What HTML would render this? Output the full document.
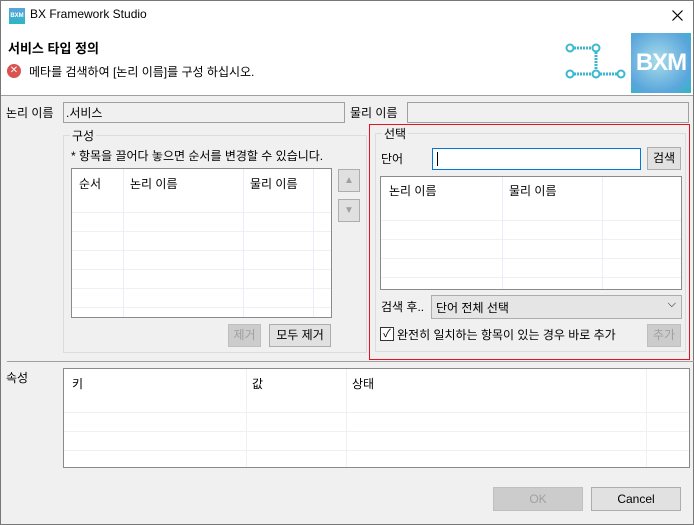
<!DOCTYPE html>
<html><head><meta charset="utf-8"><style>
*{box-sizing:border-box;margin:0;padding:0}
body{width:694px;height:525px;position:relative;background:#f0f0f0;font-family:"Liberation Sans","Noto Sans CJK KR",sans-serif;font-size:12px;color:#000;overflow:hidden}
.a{position:absolute}
.inp{position:absolute;border:1px solid #a0a0a0;background:#f0f0f0}
.btn{position:absolute;border:1px solid #adadad;background:#e1e1e1;text-align:center;font-size:12px}
.dis{color:#a0a0a0;background:#cccccc;border-color:#bfbfbf}
.tbl{position:absolute;border:1px solid #8a8a8a;background:#fff;overflow:hidden}
.grp{position:absolute;border:1px solid #dcdcdc}
.lg{position:absolute;background:#f0f0f0;padding:0 2px;font-size:12px}
</style></head><body>
<div class="a" style="left:0;top:0;width:694px;height:95px;background:#fff"></div>
<div class="a" style="left:0;top:95px;width:694px;height:1px;background:#a0a0a0"></div>
<div class="a" style="left:0;top:0;width:694px;height:525px;border:1px solid #777"></div>
<div class="a" style="left:9px;top:8px;width:16px;height:16px;background:linear-gradient(#5aa4dc,#2cb7c4);color:#fff;font-size:6px;line-height:16px;text-align:center;font-weight:bold">BXM</div>
<div class="a" style="left:30px;top:7px;font-size:12px">BX Framework Studio</div>
<svg class="a" style="left:672px;top:10px" width="11" height="11"><path d="M0.5 0.5L10.5 10.5M10.5 0.5L0.5 10.5" stroke="#000" stroke-width="1.2"/></svg>
<div class="a" style="left:8px;top:38px;font-weight:bold;font-size:13px">서비스 타입 정의</div>
<div class="a" style="left:7px;top:64px;width:14px;height:14px;border-radius:50%;background:#d9534f;color:#fff;font-size:10px;line-height:14px;text-align:center">✕</div>
<div class="a" style="left:29px;top:63px">메타를 검색하여 [논리 이름]를 구성 하십시오.</div>
<svg class="a" style="left:560px;top:38px" width="70" height="46">
<g stroke="#3bb8cf" stroke-width="2" fill="none"><path d="M14 10H32M36 14V32M14 36H32M40 36H57" stroke-dasharray="2 1" stroke-width="3"/>
<circle cx="10" cy="10" r="3.5"/><circle cx="36" cy="10" r="3.5"/><circle cx="10" cy="36" r="3.5"/><circle cx="36" cy="36" r="3.5"/><circle cx="61" cy="36" r="3.5"/></g></svg>
<div class="a" style="left:631px;top:33px;width:60px;height:60px;background:radial-gradient(circle at 45% 45%,#a8dcea,#5aa6dc 70%,#2fb6c4);color:#fff;font-weight:bold;font-size:24px;line-height:60px;text-align:center;letter-spacing:-1px">BXM</div>

<div class="a" style="left:6px;top:104px">논리 이름</div>
<div class="inp" style="left:63px;top:102px;width:282px;height:21px;padding:1px 2px">.서비스</div>
<div class="a" style="left:350px;top:104px">물리 이름</div>
<div class="inp" style="left:407px;top:102px;width:282px;height:21px"></div>

<div class="grp" style="left:63px;top:135px;width:304px;height:218px"></div>
<div class="lg" style="left:70px;top:127px">구성</div>
<div class="a" style="left:71px;top:147px">* 항목을 끌어다 놓으면 순서를 변경할 수 있습니다.</div>
<div class="tbl" style="left:71px;top:168px;width:261px;height:150px">
<svg width="261" height="150" class="a" style="left:0;top:0"><g stroke="#f0f0f0"><path d="M0 43.5H261M0 62.5H261M0 81.5H261M0 100.5H261M0 119.5H261M0 138.5H261"/><path d="M51.5 0V150M171.5 0V150M241.5 0V150" stroke="#e8eef8"/></g></svg>
<div class="a" style="left:7px;top:6px">순서</div><div class="a" style="left:58px;top:6px">논리 이름</div><div class="a" style="left:178px;top:6px">물리 이름</div></div>
<div class="btn" style="left:338px;top:169px;width:22px;height:23px;background:#e0e0e0;color:#a0a0a0;font-size:10px;line-height:21px">▲</div>
<div class="btn" style="left:338px;top:199px;width:22px;height:23px;background:#e0e0e0;color:#a0a0a0;font-size:10px;line-height:21px">▼</div>
<div class="btn dis" style="left:228px;top:324px;width:33px;height:23px;line-height:21px">제거</div>
<div class="btn" style="left:269px;top:324px;width:62px;height:23px;line-height:21px">모두 제거</div>

<div class="a" style="left:369px;top:124px;width:321px;height:236px;border:1px solid #e81123"></div>
<div class="grp" style="left:375px;top:133px;width:311px;height:219px"></div>
<div class="lg" style="left:382px;top:125px">선택</div>
<div class="a" style="left:381px;top:150px">단어</div>
<div class="a" style="left:432px;top:148px;width:209px;height:22px;border:1px solid #0078d7;background:#fff"><div class="a" style="left:4px;top:3px;width:1px;height:14px;background:#000"></div></div>
<div class="btn" style="left:647px;top:147px;width:34px;height:23px;line-height:21px">검색</div>
<div class="tbl" style="left:380px;top:176px;width:302px;height:114px">
<svg width="302" height="114" class="a" style="left:0;top:0"><g stroke="#f0f0f0"><path d="M0 43.5H302M0 62.5H302M0 81.5H302M0 100.5H302"/><path d="M121.5 0V114M221.5 0V114" stroke="#e8eef8"/></g></svg>
<div class="a" style="left:8px;top:5px">논리 이름</div><div class="a" style="left:128px;top:5px">물리 이름</div></div>
<div class="a" style="left:381px;top:298px">검색 후..</div>
<div class="a" style="left:431px;top:295px;width:251px;height:24px;border:1px solid #adadad;background:#e5e5e5;padding:3px 4px">단어 전체 선택<span class="a" style="right:5px;top:2px;font-size:11px">⌵</span></div>
<div class="a" style="left:380px;top:327px;width:14px;height:14px;border:1px solid #333;background:#fff;font-size:11px;line-height:12px;text-align:center">✓</div>
<div class="a" style="left:397px;top:326px">완전히 일치하는 항목이 있는 경우 바로 추가</div>
<div class="btn dis" style="left:647px;top:324px;width:34px;height:23px;line-height:21px">추가</div>

<div class="a" style="left:7px;top:361px;width:687px;height:1px;background:#a0a0a0"></div>
<div class="a" style="left:6px;top:369px">속성</div>
<div class="tbl" style="left:63px;top:368px;width:627px;height:100px">
<svg width="627" height="100" class="a" style="left:0;top:0"><g stroke="#f0f0f0"><path d="M0 43.5H627M0 62.5H627M0 81.5H627"/><path d="M182.5 0V100M282.5 0V100M582.5 0V100"/></g></svg>
<div class="a" style="left:8px;top:6px">키</div><div class="a" style="left:188px;top:6px">값</div><div class="a" style="left:288px;top:6px">상태</div></div>
<div class="btn dis" style="left:493px;top:487px;width:90px;height:24px;line-height:22px">OK</div>
<div class="btn" style="left:591px;top:487px;width:90px;height:24px;line-height:22px">Cancel</div>
</body></html>
